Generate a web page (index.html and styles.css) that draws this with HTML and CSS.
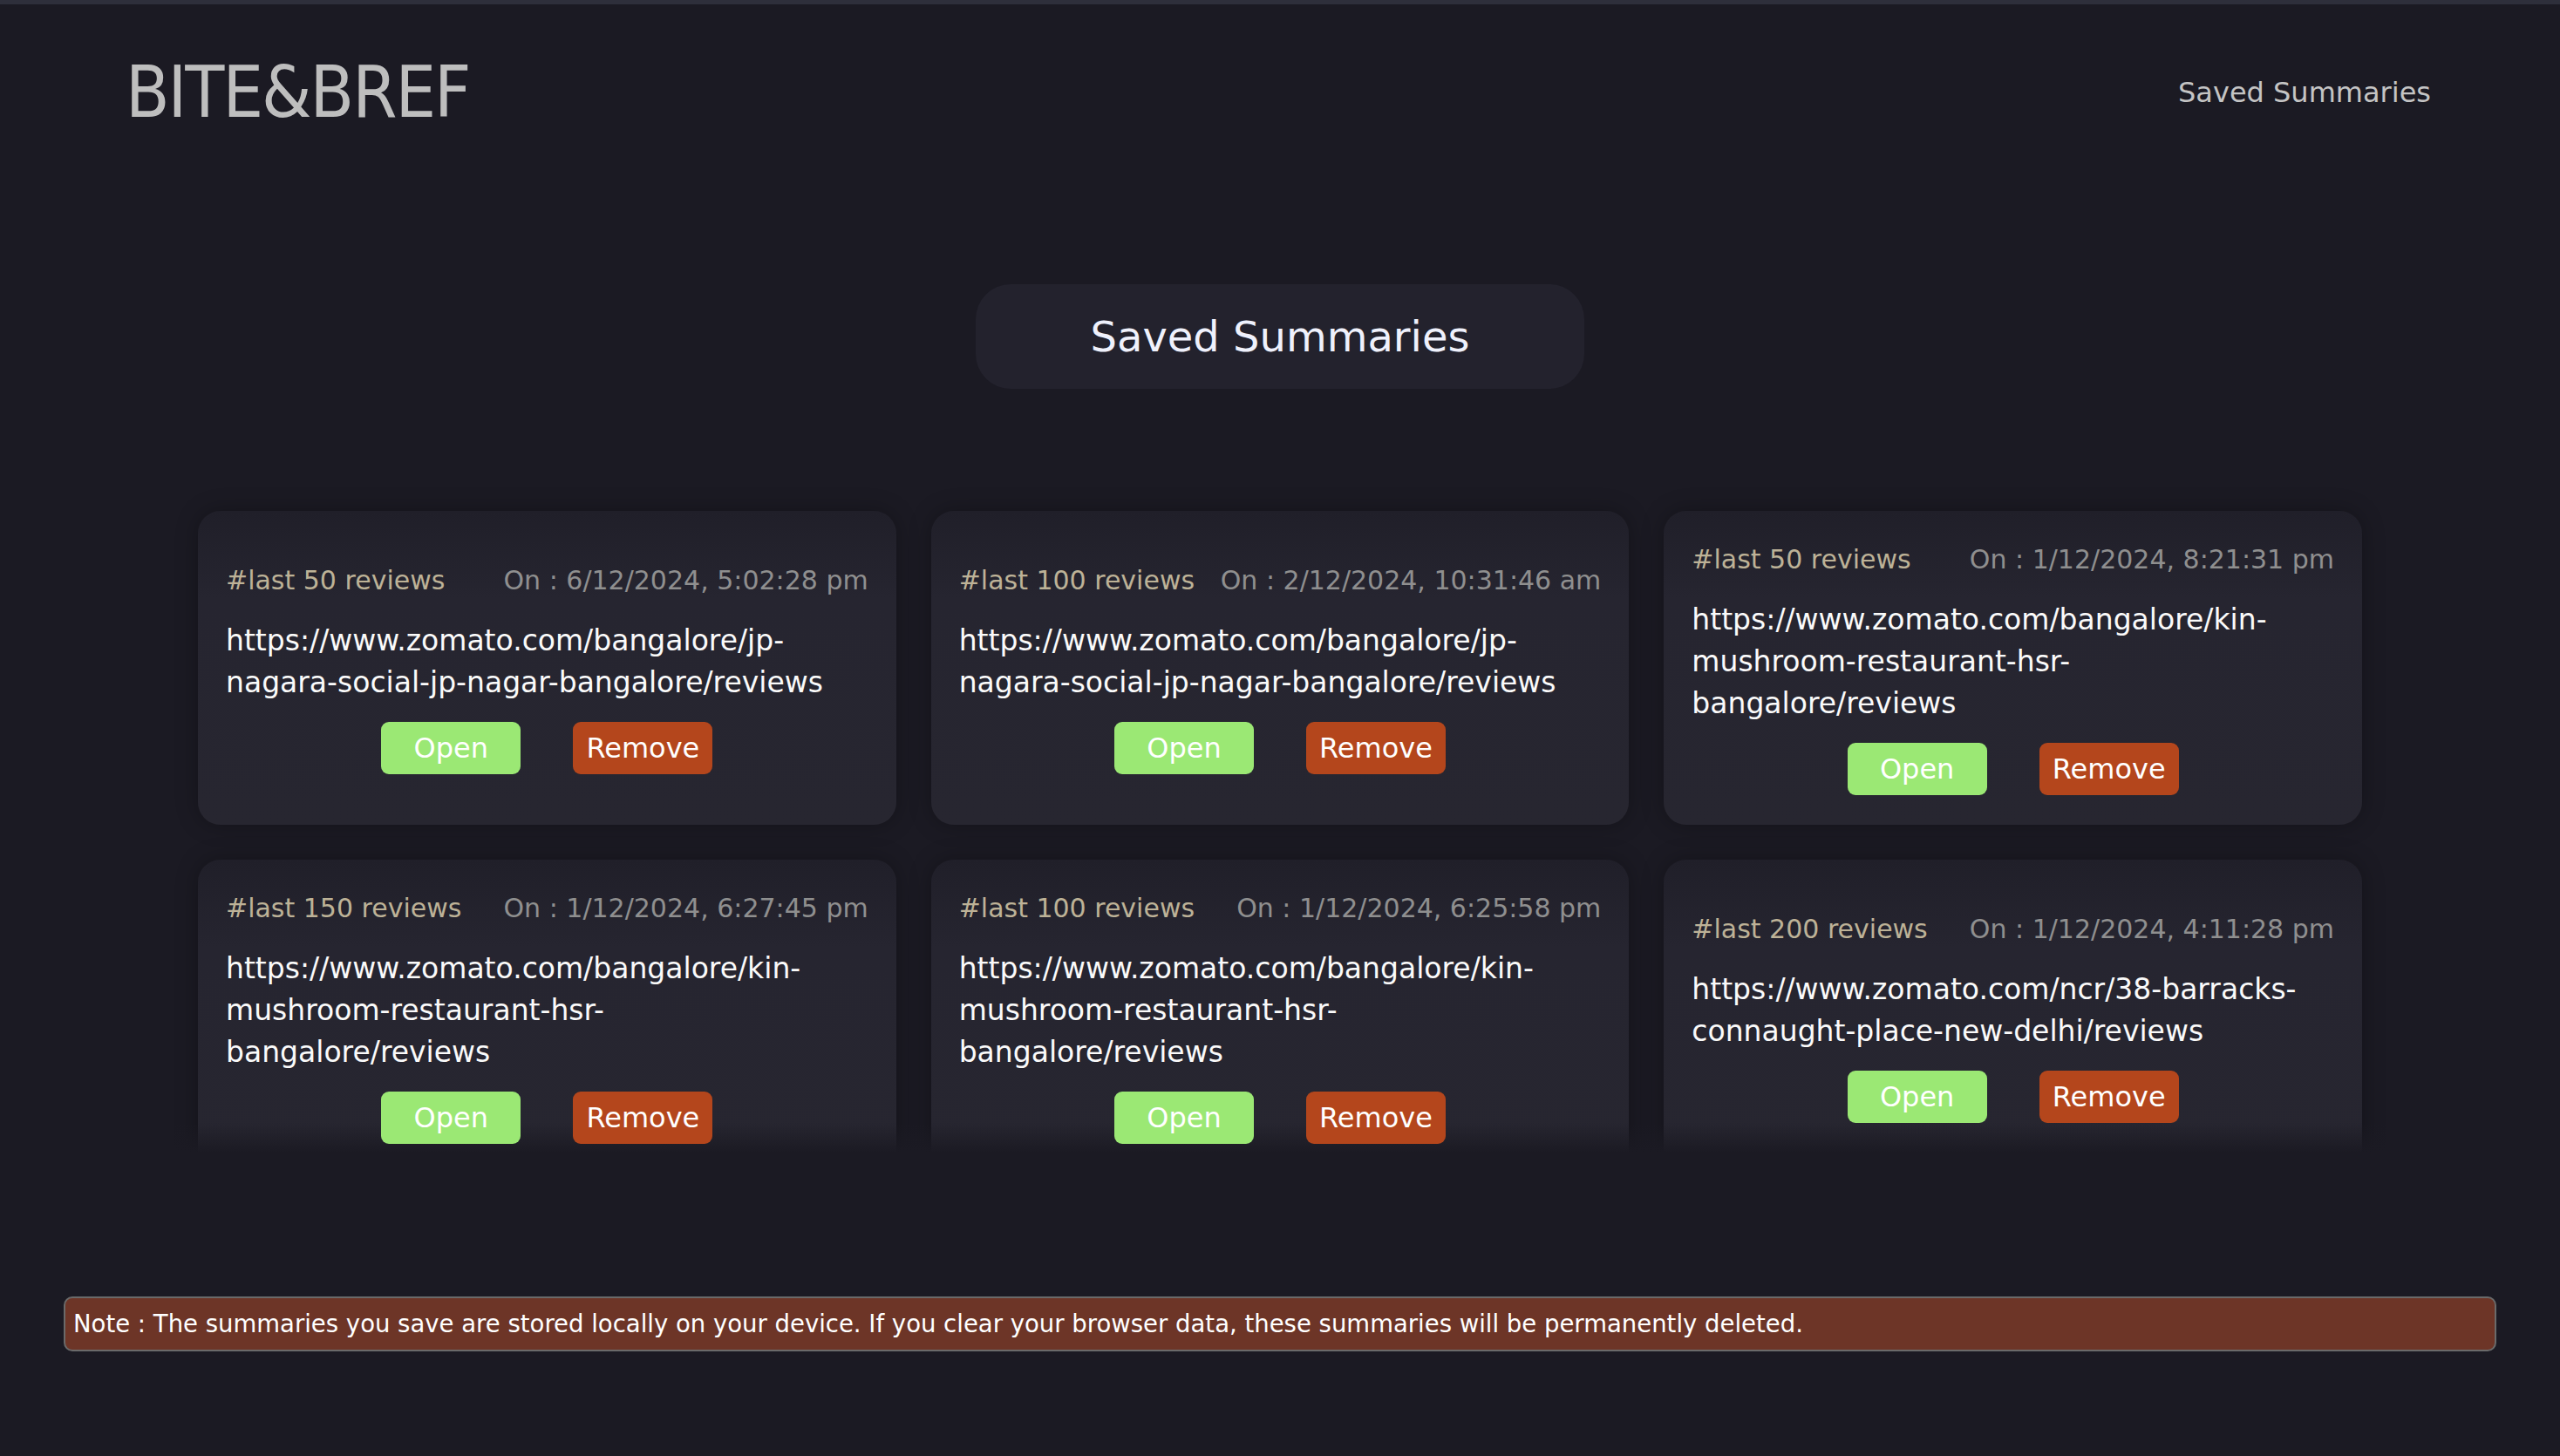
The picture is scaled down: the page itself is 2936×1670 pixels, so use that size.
FILE: index.html
```html
<!DOCTYPE html>
<html lang="en">
<head>
<meta charset="utf-8">
<title>BITE&amp;BREF - Saved Summaries</title>
<link rel="stylesheet" href="styles.css">
</head>
<body>
<div class="head">
  <div class="logo">BITE&amp;BREF</div>
  <a class="nav" href="#">Saved Summaries</a>
</div>

<div class="title"><span>Saved Summaries</span></div>

<div class="list">
  <div class="grid">
    <div class="card">
      <div class="meta"><span class="tag">#last 50 reviews</span><span class="date">On : 6/12/2024, 5:02:28 pm</span></div>
      <div class="url">https://www.zomato.com/bangalore/jp-nagara-social-jp-nagar-bangalore/reviews</div>
      <div class="btns"><button class="open">Open</button><button class="remove">Remove</button></div>
    </div>
    <div class="card">
      <div class="meta"><span class="tag">#last 100 reviews</span><span class="date">On : 2/12/2024, 10:31:46 am</span></div>
      <div class="url">https://www.zomato.com/bangalore/jp-nagara-social-jp-nagar-bangalore/reviews</div>
      <div class="btns"><button class="open">Open</button><button class="remove">Remove</button></div>
    </div>
    <div class="card">
      <div class="meta"><span class="tag">#last 50 reviews</span><span class="date">On : 1/12/2024, 8:21:31 pm</span></div>
      <div class="url">https://www.zomato.com/bangalore/kin-mushroom-restaurant-hsr-bangalore/reviews</div>
      <div class="btns"><button class="open">Open</button><button class="remove">Remove</button></div>
    </div>
    <div class="card">
      <div class="meta"><span class="tag">#last 150 reviews</span><span class="date">On : 1/12/2024, 6:27:45 pm</span></div>
      <div class="url">https://www.zomato.com/bangalore/kin-mushroom-restaurant-hsr-bangalore/reviews</div>
      <div class="btns"><button class="open">Open</button><button class="remove">Remove</button></div>
    </div>
    <div class="card">
      <div class="meta"><span class="tag">#last 100 reviews</span><span class="date">On : 1/12/2024, 6:25:58 pm</span></div>
      <div class="url">https://www.zomato.com/bangalore/kin-mushroom-restaurant-hsr-bangalore/reviews</div>
      <div class="btns"><button class="open">Open</button><button class="remove">Remove</button></div>
    </div>
    <div class="card">
      <div class="meta"><span class="tag">#last 200 reviews</span><span class="date">On : 1/12/2024, 4:11:28 pm</span></div>
      <div class="url">https://www.zomato.com/ncr/38-barracks-connaught-place-new-delhi/reviews</div>
      <div class="btns"><button class="open">Open</button><button class="remove">Remove</button></div>
    </div>
  </div>
</div>

<div class="note">Note : The summaries you save are stored locally on your device. If you clear your browser data, these summaries will be permanently deleted.</div>
</body>
</html>
```

FILE: styles.css
```css
* {box-sizing:border-box;}
html {background:#1b1a23;}
body {margin:0;min-height:1670px;background:#1b1a23;border-top:5px solid #2e2f3b;font-family:"DejaVu Sans","Liberation Sans",sans-serif;color:#fff;}
a {text-decoration:none;}

/* header */
.head {display:flex;justify-content:space-between;align-items:center;height:202px;padding:0 148px 0 144px;}
.logo {font-family:"Liberation Sans Narrow","DejaVu Sans Condensed","Liberation Sans",sans-serif;font-size:82px;letter-spacing:-2px;line-height:1;color:#bebebe;}
.nav {font-size:32px;color:#c4c4c4;}

/* page title */
.title {display:flex;justify-content:center;margin-top:119px;}
.title span {background:#23222d;border-radius:40px;padding:0 132px;font-size:48px;line-height:120px;color:#eff1fc;}

/* saved cards */
.list {position:relative;height:776px;overflow:hidden;margin:100px 187px 0;padding:40px 40px 0;}
.list::after {content:"";position:absolute;left:0;right:0;bottom:0;height:34px;background:linear-gradient(rgba(27,26,35,0),#1b1a23);z-index:1;}
.grid {display:grid;grid-template-columns:repeat(3,1fr);gap:40px;}
.card {display:flex;flex-direction:column;justify-content:center;gap:21px;padding:32px 32px 34px;min-height:360px;border-radius:26px;background:linear-gradient(180deg,#201f29 0%,#262530 28%,#272630 100%);box-shadow:0 0 26px rgba(0,0,0,.28);}
.meta {display:flex;justify-content:space-between;font-size:30px;line-height:48px;}
.tag {color:#bdb297;}
.date {color:#8f8f8f;}
.url {font-size:33px;line-height:48px;color:#fafafa;margin-right:8px;}
.btns {display:flex;justify-content:center;gap:60px;}
.btns button {position:relative;z-index:2;width:160px;height:60px;border:none;border-radius:9px;font-family:inherit;font-size:32px;color:#fff;padding:0;cursor:pointer;}
.open {background:#9be874;}
.remove {background:#b4461c;}

/* footer note */
.note {margin:165px 73px 0;border:2px solid #6a6a6a;border-radius:10px;background:#6d3527;padding:0 9px;font-size:27.5px;line-height:59px;color:#fff;}
```
